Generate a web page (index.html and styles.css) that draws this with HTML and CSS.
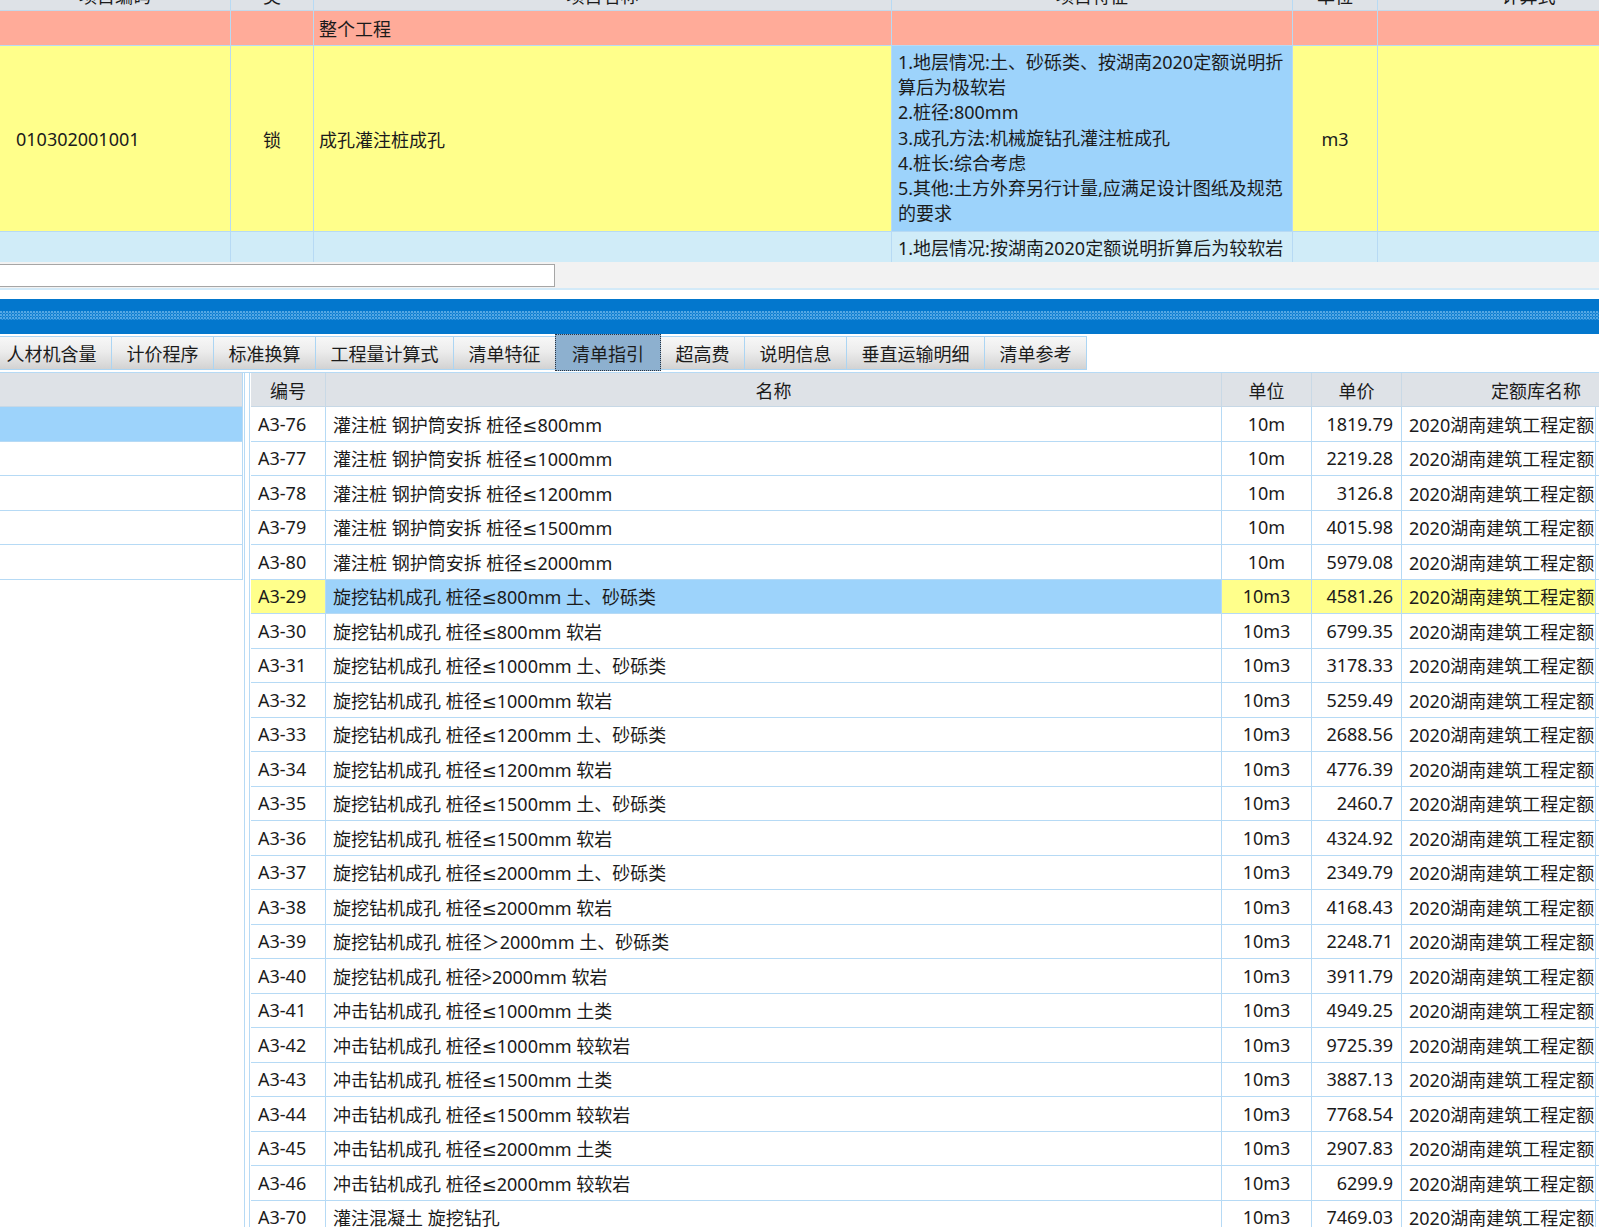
FILE: index.html
```html
<!DOCTYPE html>
<html lang="zh-CN">
<head>
<meta charset="utf-8">
<title>清单指引</title>
<link rel="stylesheet" href="styles.css">
</head>
<body>
<div class="app">
  <div class="top-grid">
    <div class="tg-table">
      <div class="tg-row tg-head">
        <div class="c">项目编码</div>
        <div class="c">类</div>
        <div class="c">项目名称</div>
        <div class="c">项目特征</div>
        <div class="c">单位</div>
        <div class="c">计算式</div>
      </div>
      <div class="tg-row tg-pink">
        <div class="c"></div>
        <div class="c"></div>
        <div class="c left">整个工程</div>
        <div class="c"></div>
        <div class="c"></div>
        <div class="c"></div>
      </div>
      <div class="tg-row tg-yellow">
        <div class="c left code">010302001001</div>
        <div class="c">锁</div>
        <div class="c left">成孔灌注桩成孔</div>
        <div class="c feat selcell">1.地层情况:土、砂砾类、按湖南2020定额说明折算后为极软岩<br>2.桩径:800mm<br>3.成孔方法:机械旋钻孔灌注桩成孔<br>4.桩长:综合考虑<br>5.其他:土方外弃另行计量,应满足设计图纸及规范的要求</div>
        <div class="c">m3</div>
        <div class="c"></div>
      </div>
      <div class="tg-row tg-cyan">
        <div class="c"></div>
        <div class="c"></div>
        <div class="c"></div>
        <div class="c feat">1.地层情况:按湖南2020定额说明折算后为较软岩<br>2.桩径:800mm</div>
        <div class="c"></div>
        <div class="c"></div>
      </div>
    </div>
  </div>

  <div class="input-bar">
    <div class="input-box"></div>
  </div>
  <div class="gap"></div>
  <div class="band"><div class="band-dots"></div></div>

  <div class="tabs">
    <div class="tab">人材机含量</div>
    <div class="tab">计价程序</div>
    <div class="tab">标准换算</div>
    <div class="tab">工程量计算式</div>
    <div class="tab">清单特征</div>
    <div class="tab active">清单指引</div>
    <div class="tab">超高费</div>
    <div class="tab">说明信息</div>
    <div class="tab">垂直运输明细</div>
    <div class="tab">清单参考</div>
  </div>

  <div class="lower">
    <div class="left-panel">
      <div class="lp-row lp-head"></div>
      <div class="lp-row lp-sel"></div>
      <div class="lp-row"></div>
      <div class="lp-row"></div>
      <div class="lp-row"></div>
      <div class="lp-row"></div>
    </div>
    <div class="right-panel">
      <div class="rp-row rp-head">
        <div class="c">编号</div>
        <div class="c">名称</div>
        <div class="c">单位</div>
        <div class="c">单价</div>
        <div class="c span2">定额库名称</div>
      </div>
      <div class="rp-row"><div class="c l">A3-76</div><div class="c l">灌注桩 钢护筒安拆 桩径≤800mm</div><div class="c">10m</div><div class="c r">1819.79</div><div class="c l">2020湖南建筑工程定额</div><div class="c x"></div></div>
      <div class="rp-row"><div class="c l">A3-77</div><div class="c l">灌注桩 钢护筒安拆 桩径≤1000mm</div><div class="c">10m</div><div class="c r">2219.28</div><div class="c l">2020湖南建筑工程定额</div><div class="c x"></div></div>
      <div class="rp-row"><div class="c l">A3-78</div><div class="c l">灌注桩 钢护筒安拆 桩径≤1200mm</div><div class="c">10m</div><div class="c r">3126.8</div><div class="c l">2020湖南建筑工程定额</div><div class="c x"></div></div>
      <div class="rp-row"><div class="c l">A3-79</div><div class="c l">灌注桩 钢护筒安拆 桩径≤1500mm</div><div class="c">10m</div><div class="c r">4015.98</div><div class="c l">2020湖南建筑工程定额</div><div class="c x"></div></div>
      <div class="rp-row"><div class="c l">A3-80</div><div class="c l">灌注桩 钢护筒安拆 桩径≤2000mm</div><div class="c">10m</div><div class="c r">5979.08</div><div class="c l">2020湖南建筑工程定额</div><div class="c x"></div></div>
      <div class="rp-row sel"><div class="c l yel">A3-29</div><div class="c l blu">旋挖钻机成孔 桩径≤800mm 土、砂砾类</div><div class="c yel">10m3</div><div class="c r yel">4581.26</div><div class="c l yel">2020湖南建筑工程定额</div><div class="c x"></div></div>
      <div class="rp-row"><div class="c l">A3-30</div><div class="c l">旋挖钻机成孔 桩径≤800mm 软岩</div><div class="c">10m3</div><div class="c r">6799.35</div><div class="c l">2020湖南建筑工程定额</div><div class="c x"></div></div>
      <div class="rp-row"><div class="c l">A3-31</div><div class="c l">旋挖钻机成孔 桩径≤1000mm 土、砂砾类</div><div class="c">10m3</div><div class="c r">3178.33</div><div class="c l">2020湖南建筑工程定额</div><div class="c x"></div></div>
      <div class="rp-row"><div class="c l">A3-32</div><div class="c l">旋挖钻机成孔 桩径≤1000mm 软岩</div><div class="c">10m3</div><div class="c r">5259.49</div><div class="c l">2020湖南建筑工程定额</div><div class="c x"></div></div>
      <div class="rp-row"><div class="c l">A3-33</div><div class="c l">旋挖钻机成孔 桩径≤1200mm 土、砂砾类</div><div class="c">10m3</div><div class="c r">2688.56</div><div class="c l">2020湖南建筑工程定额</div><div class="c x"></div></div>
      <div class="rp-row"><div class="c l">A3-34</div><div class="c l">旋挖钻机成孔 桩径≤1200mm 软岩</div><div class="c">10m3</div><div class="c r">4776.39</div><div class="c l">2020湖南建筑工程定额</div><div class="c x"></div></div>
      <div class="rp-row"><div class="c l">A3-35</div><div class="c l">旋挖钻机成孔 桩径≤1500mm 土、砂砾类</div><div class="c">10m3</div><div class="c r">2460.7</div><div class="c l">2020湖南建筑工程定额</div><div class="c x"></div></div>
      <div class="rp-row"><div class="c l">A3-36</div><div class="c l">旋挖钻机成孔 桩径≤1500mm 软岩</div><div class="c">10m3</div><div class="c r">4324.92</div><div class="c l">2020湖南建筑工程定额</div><div class="c x"></div></div>
      <div class="rp-row"><div class="c l">A3-37</div><div class="c l">旋挖钻机成孔 桩径≤2000mm 土、砂砾类</div><div class="c">10m3</div><div class="c r">2349.79</div><div class="c l">2020湖南建筑工程定额</div><div class="c x"></div></div>
      <div class="rp-row"><div class="c l">A3-38</div><div class="c l">旋挖钻机成孔 桩径≤2000mm 软岩</div><div class="c">10m3</div><div class="c r">4168.43</div><div class="c l">2020湖南建筑工程定额</div><div class="c x"></div></div>
      <div class="rp-row"><div class="c l">A3-39</div><div class="c l">旋挖钻机成孔 桩径＞2000mm 土、砂砾类</div><div class="c">10m3</div><div class="c r">2248.71</div><div class="c l">2020湖南建筑工程定额</div><div class="c x"></div></div>
      <div class="rp-row"><div class="c l">A3-40</div><div class="c l">旋挖钻机成孔 桩径&gt;2000mm 软岩</div><div class="c">10m3</div><div class="c r">3911.79</div><div class="c l">2020湖南建筑工程定额</div><div class="c x"></div></div>
      <div class="rp-row"><div class="c l">A3-41</div><div class="c l">冲击钻机成孔 桩径≤1000mm 土类</div><div class="c">10m3</div><div class="c r">4949.25</div><div class="c l">2020湖南建筑工程定额</div><div class="c x"></div></div>
      <div class="rp-row"><div class="c l">A3-42</div><div class="c l">冲击钻机成孔 桩径≤1000mm 较软岩</div><div class="c">10m3</div><div class="c r">9725.39</div><div class="c l">2020湖南建筑工程定额</div><div class="c x"></div></div>
      <div class="rp-row"><div class="c l">A3-43</div><div class="c l">冲击钻机成孔 桩径≤1500mm 土类</div><div class="c">10m3</div><div class="c r">3887.13</div><div class="c l">2020湖南建筑工程定额</div><div class="c x"></div></div>
      <div class="rp-row"><div class="c l">A3-44</div><div class="c l">冲击钻机成孔 桩径≤1500mm 较软岩</div><div class="c">10m3</div><div class="c r">7768.54</div><div class="c l">2020湖南建筑工程定额</div><div class="c x"></div></div>
      <div class="rp-row"><div class="c l">A3-45</div><div class="c l">冲击钻机成孔 桩径≤2000mm 土类</div><div class="c">10m3</div><div class="c r">2907.83</div><div class="c l">2020湖南建筑工程定额</div><div class="c x"></div></div>
      <div class="rp-row"><div class="c l">A3-46</div><div class="c l">冲击钻机成孔 桩径≤2000mm 较软岩</div><div class="c">10m3</div><div class="c r">6299.9</div><div class="c l">2020湖南建筑工程定额</div><div class="c x"></div></div>
      <div class="rp-row"><div class="c l">A3-70</div><div class="c l">灌注混凝土 旋挖钻孔</div><div class="c">10m3</div><div class="c r">7469.03</div><div class="c l">2020湖南建筑工程定额</div><div class="c x"></div></div>
    </div>
  </div>
</div>
</body>
</html>
```

FILE: styles.css
```css
html, body {
  margin: 0;
  padding: 0;
  background: #ffffff;
}
body {
  width: 1599px;
  height: 1227px;
  overflow: hidden;
  font-family: "Noto Sans", "DejaVu Sans", "Noto Sans CJK SC", sans-serif;
  font-size: 18px;
  color: #1b1b1b;
}
.app {
  width: 1599px;
  height: 1227px;
  overflow: hidden;
}

/* ---------- top grid ---------- */
.top-grid {
  height: 262px;
  overflow: hidden;
  background: #f2f2f2;
}
.tg-table {
  margin-top: -20px;
  width: 1680px;
}
.tg-row {
  display: grid;
  grid-template-columns: 231px 83px 578px 401px 85px 302px;
  border-bottom: 1px solid #b7daf4;
}
.tg-row .c {
  border-right: 1px solid #b7daf4;
  display: flex;
  align-items: center;
  justify-content: center;
  white-space: nowrap;
  overflow: hidden;
}
.tg-row .c.left {
  justify-content: flex-start;
  padding-left: 5px;
}
.tg-row .c.code {
  padding-left: 16px;
}
.tg-head {
  height: 31px;
  background: #dee2e7;
  box-sizing: border-box;
  border-bottom: 1px solid #c4d9ea;
}
.tg-pink {
  height: 35px;
  box-sizing: border-box;
  background: #ffab99;
}
.tg-yellow {
  height: 186px;
  box-sizing: border-box;
  background: #ffff8b;
}
.tg-cyan {
  height: 60px;
  background: #d0ecf8;
}
.tg-row .c.feat {
  display: block;
  white-space: normal;
  text-align: left;
  line-height: 25.2px;
  padding: 4px 8px 4px 6px;
}
.tg-row .c.selcell {
  background: #9dd3fb;
}

/* ---------- input bar ---------- */
.input-bar {
  background: #f2f2f2;
  border-bottom: 2px solid #d3eaf8;
  padding-top: 2px;
  box-sizing: border-box;
  height: 28px;
}
.input-box {
  width: 556px;
  height: 23px;
  margin-left: -1px;
  box-sizing: border-box;
  background: #ffffff;
  border: 1px solid #a6a6a6;
}
.gap {
  height: 9px;
  background: #ffffff;
}

/* ---------- blue band ---------- */
.band {
  height: 35px;
  box-sizing: border-box;
  padding-top: 12px;
  background: #0377cd;
}
.band-dots {
  height: 9px;
  background-color: #0a7bcf;
  background-image:
    radial-gradient(circle at 1px 1px, #54a7e4 0.9px, transparent 1.1px),
    radial-gradient(circle at 2.5px 2.5px, #3b98dc 0.8px, transparent 1.1px);
  background-size: 3px 3px, 3px 3px;
}

/* ---------- tabs ---------- */
.tabs {
  display: flex;
  align-items: flex-start;
  height: 38px;
  margin-left: -8px;
}
.tab {
  flex: none;
  height: 34px;
  margin-top: 2px;
  margin-left: -1px;
  box-sizing: border-box;
  padding: 0 14.5px;
  border: 1px solid #acd5f3;
  background: linear-gradient(to bottom, #f7f7f7 0%, #ececec 45%, #dcdcdc 80%, #d2d2d2 100%);
  display: flex;
  align-items: center;
  white-space: nowrap;
  color: #1b1b1b;
}
.tab.active {
  height: 37px;
  margin-top: 0;
  padding: 0 16px;
  border: 1px dotted #2c3440;
  background: #8db0cf;
  position: relative;
  z-index: 1;
}

/* ---------- lower area ---------- */
.lower {
  display: flex;
  align-items: stretch;
  height: 855px;
  border-top: 1px solid #b6daf5;
}
.left-panel {
  flex: none;
  width: 245px;
  box-sizing: border-box;
  border-right: 1px solid #b6daf5;
  margin-right: 4px;
}
.lp-row {
  width: 243px;
  box-sizing: border-box;
  height: 34.5px;
  border-right: 1px solid #b6daf5;
  border-bottom: 1px solid #b6daf5;
  background: #ffffff;
}
.lp-row.lp-head {
  height: 34px;
  background: #dee2e7;
  border-bottom-color: #c7d8e6;
}
.lp-row.lp-sel {
  background: #9dd3fb;
}

.right-panel {
  flex: none;
  width: 1422px;
  box-sizing: border-box;
  border-left: 1px solid #b6daf5;
  padding-left: 1px;
}
.rp-row {
  display: grid;
  grid-template-columns: 75px 896px 90px 90px 194px 74px;
  height: 34.5px;
  box-sizing: border-box;
  border-bottom: 1px solid #b6daf5;
}
.rp-row .c {
  border-right: 1px solid #b6daf5;
  display: flex;
  align-items: center;
  justify-content: center;
  white-space: nowrap;
  overflow: hidden;
  padding: 0 7px;
}
.rp-row .c.l {
  justify-content: flex-start;
}
.rp-row .c.r {
  justify-content: flex-end;
  padding-right: 8px;
}
.rp-row .c.x {
  border-right: none;
}
.rp-head {
  height: 34px;
  background: #dee2e7;
  border-bottom-color: #c7d8e6;
}
.rp-head .c {
  border-right-color: #c9d9e6;
}
.rp-head .c.span2 {
  grid-column: span 2;
  border-right: none;
}
.rp-row .c.yel {
  background: #ffff8b;
}
.rp-row .c.blu {
  background: #9dd3fb;
}
```
